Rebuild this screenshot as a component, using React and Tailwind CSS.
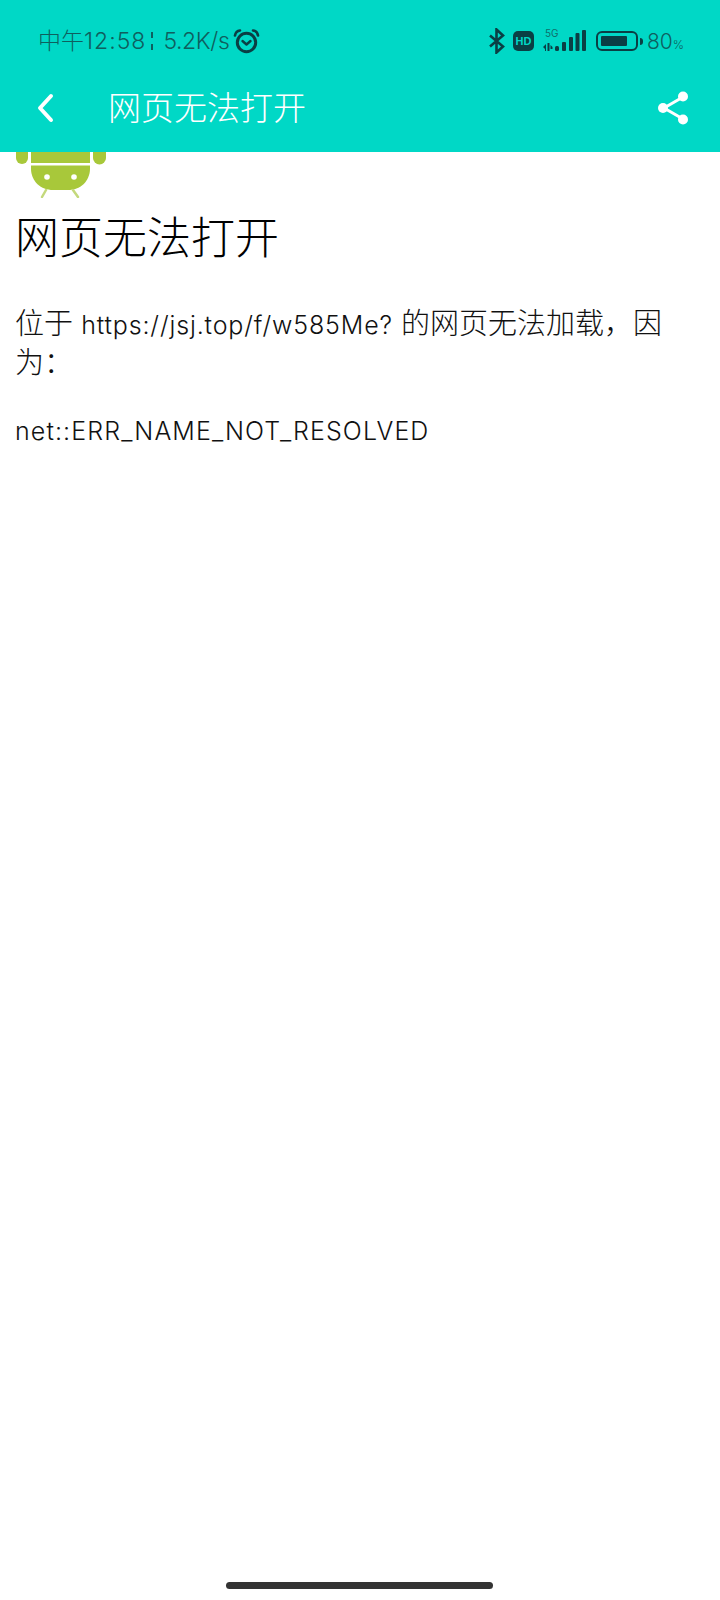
const cjk = "font-['Inter','Noto_Sans_CJK_SC',sans-serif]";

function AlarmIcon() {
  return (
    <svg width="27" height="25" viewBox="0 0 27 25" fill="none" stroke="#0a3f44" strokeLinecap="round" strokeLinejoin="round">
      <circle cx="13.5" cy="13.5" r="9.2" strokeWidth="3" />
      <path d="M9.5 12l4 3.5 4-3.5" strokeWidth="2.4" />
      <path d="M2 6.500C2.500 3.500 4.500 1.800 7 1.500M25 6.500C24.500 3.500 22.500 1.800 20 1.500" strokeWidth="2.6" />
    </svg>
  );
}

function BluetoothIcon() {
  return (
    <svg width="18" height="26" viewBox="0 0 18 26" fill="none" stroke="#0a3f44" strokeWidth="2.6">
      <path d="M2 7.500l13 11-6.500 6V1.500l6.500 6-13 11" />
    </svg>
  );
}

function HdBadge() {
  return (
    <div className="w-[21px] h-[20px] rounded-[5px] bg-[#0a3f44] flex items-center justify-center">
      <span className="text-[#00d8c6] text-[11px] leading-none font-bold font-['Liberation_Sans',sans-serif]">HD</span>
    </div>
  );
}

function SignalIcon() {
  return (
    <div className="relative w-[45px] h-[22px]">
      <span className="absolute left-[3px] -top-[2px] text-[10px] leading-none text-[#0f6f6c] font-['Inter',sans-serif]">5G</span>
      <svg className="absolute inset-0" width="45" height="22" viewBox="0 0 45 22" fill="#0a3f44">
        <path d="M1 17l3-3v3h0v4H3v-2zM5.500 13h2v8h-2zM8.500 15l2 2v2h-2z" />
        <rect x="13" y="16" width="4" height="5" rx="1.500" />
        <rect x="20" y="12" width="4" height="9" rx="1" />
        <rect x="27" y="7" width="4" height="14" rx="1" />
        <rect x="33.500" y="3" width="4" height="18" rx="1" />
        <rect x="40" y="0" width="4" height="21" rx="1" />
      </svg>
    </div>
  );
}

function BatteryIcon() {
  return (
    <div className="flex items-center gap-[2px]">
      <div className="w-[42px] h-[20px] rounded-[6px] border-2 border-[#0a3f44] p-[3px]">
        <div className="h-full w-[80%] bg-[#0a3f44] rounded-[1px]" />
      </div>
      <div className="w-[3px] h-[7px] bg-[#0a3f44] rounded-r-sm" />
    </div>
  );
}

function ShareIcon() {
  return (
    <svg width="32" height="34" viewBox="0 0 32 34" fill="white" stroke="white">
      <path d="M7 17L26 6M7 17l19 11" strokeWidth="3" />
      <circle cx="6" cy="17" r="5" strokeWidth="0" />
      <circle cx="26" cy="5.500" r="5" strokeWidth="0" />
      <circle cx="26" cy="28.500" r="5" strokeWidth="0" />
    </svg>
  );
}

function AndroidLogo() {
  return (
    <svg width="92" height="46" viewBox="0 0 92 46" className="block ml-[15px]">
      <g fill="#a8c83a">
        <path d="M1 0h12v6a6 6 0 0 1-12 0z" />
        <path d="M78 0h13v6a6.500 6.500 0 0 1-13 0z" />
        <path d="M16 0h59v11H16z" />
        <path d="M16 13.500h59v3c0 13-10 21.500-22 21.500H38c-12 0-22-8.500-22-21.500z" />
      </g>
      <path d="M31 38l-4 7M58 38l5 7" stroke="#c4d97c" strokeWidth="2.500" strokeLinecap="round" />
      <circle cx="32" cy="25" r="2.800" fill="#fff" />
      <circle cx="59" cy="25" r="2.800" fill="#fff" />
    </svg>
  );
}

export default function App() {
  return (
    <div className={`w-[720px] h-[1600px] bg-white flex flex-col ${cjk}`}>
      <header className="bg-[#00d8c6] h-[152px] shrink-0 flex flex-col">
        <div className="h-[82px] pl-[38px] pr-[36px] flex items-center justify-between">
          <div className="flex items-center text-[#0f5f5e] text-[23px] font-light leading-none">
            <span>中午</span>
            <span className="tracking-[1px]">12:58</span>
            <span className="ml-[5px] mr-[10px] w-[2px] h-[18px] border-l-2 border-dashed border-[#0f5f5e]" />
            <span className="tracking-[-0.4px]">5.2K/s</span>
            <span className="ml-[4px]"><AlarmIcon /></span>
          </div>
          <div className="flex items-center">
            <BluetoothIcon />
            <div className="ml-[7px]"><HdBadge /></div>
            <div className="ml-[8px]"><SignalIcon /></div>
            <div className="ml-[9px]"><BatteryIcon /></div>
            <span className="ml-[4px] text-[#0f5f5e] text-[21px] font-light leading-none">
              80<span className="text-[12px]">%</span>
            </span>
          </div>
        </div>
        <div className="flex-1 pl-[36px] pr-[31px] pb-[18px] flex items-center">
          <svg width="18" height="30" viewBox="0 0 18 30" fill="none" stroke="white" strokeWidth="4" strokeLinecap="round" strokeLinejoin="round">
            <path d="M15 3L4 15l11 12" />
          </svg>
          <h2 className="ml-[54px] text-white text-[33px] font-light leading-none">网页无法打开</h2>
          <div className="ml-auto"><ShareIcon /></div>
        </div>
      </header>

      <main className="flex-1 relative">
        <AndroidLogo />
        <h1 className="mt-[10px] ml-[15px] text-[44px] leading-[60px] text-black font-light">网页无法打开</h1>
        <p className="mt-[37px] ml-[15px] w-[660px] text-[29px] leading-[38px] text-[#111] font-light">
          位于 <span className="text-[25px] tracking-[0.85px]">https://jsj.top/f/w585Me?</span> 的网页无法加载，因为：
        </p>
        <p className="mt-[30px] ml-[15px] text-[25px] leading-[38px] text-[#111] font-light tracking-[1.1px]">
          net::ERR_NAME_NOT_RESOLVED
        </p>
        <div className="absolute left-[226px] bottom-[11px] w-[267px] h-[7px] rounded-full bg-[#333]" />
      </main>
    </div>
  );
}
